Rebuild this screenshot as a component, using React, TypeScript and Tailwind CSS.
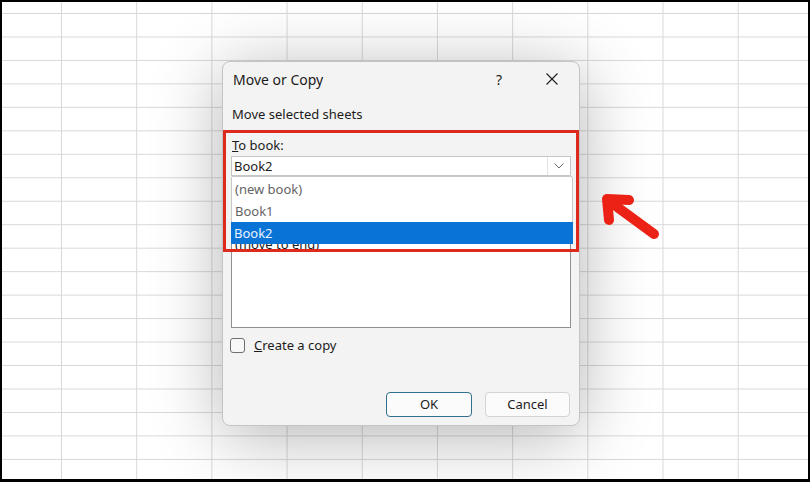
import React from 'react';

const font = "font-['Noto_Sans','Open_Sans',sans-serif]";

function CloseIcon() {
  return (
    <svg width="12" height="12" viewBox="0 0 12 12" fill="none" stroke="#1f1f1f" strokeWidth="1.1">
      <line x1="0.5" y1="0.5" x2="11.5" y2="11.5" />
      <line x1="11.5" y1="0.5" x2="0.5" y2="11.5" />
    </svg>
  );
}

function Chevron() {
  return (
    <svg width="10" height="6" viewBox="0 0 10 6" fill="none" stroke="#6b6b6b" strokeWidth="1">
      <polyline points="0.5,0.5 5,5 9.5,0.5" />
    </svg>
  );
}

function Arrow() {
  return (
    <svg className="absolute left-[590px] top-[180px]" width="75" height="65" viewBox="0 0 75 65">
      <g stroke="#ec2216" strokeWidth="10" strokeLinecap="round" strokeLinejoin="round" fill="none">
        <polyline points="37,18 15,17 17,38" />
        <line x1="17" y1="19" x2="62" y2="52" />
      </g>
    </svg>
  );
}

function Dialog() {
  return (
    <div className={`absolute left-[220px] top-[59px] w-[358px] h-[365px] flex flex-col rounded-lg border border-[#c4c4c4] bg-[#f3f3f3] text-[#1b1b1b] shadow-[0_10px_70px_rgba(0,0,0,0.3)] ${font}`}>
      {/* title bar */}
      <div className="h-[34px] flex items-center pl-[10px]">
        <span className="flex-1 text-[14px]">Move or Copy</span>
        <span className="w-[30px] text-center text-[14px]">?</span>
        <span className="w-[44px] ml-[16px] mr-[5px] flex justify-center">
          <CloseIcon />
        </span>
      </div>

      <div className="px-[8px] flex flex-col flex-1 text-[13px]">
        <div className="mt-[9px] h-[18px] leading-[18px] pl-[1px]">Move selected sheets</div>
        <div className="mt-[13px] h-[18px] leading-[18px] pl-[1px]">
          <u>T</u>o book:
        </div>
        <div className="mt-[2px] h-[20px] flex border border-[#c6c6c6] bg-white">
          <span className="flex-1 pl-[2px] leading-[18px]">Book2</span>
          <span className="w-[23px] flex items-center justify-center border-l border-[#e2e2e2]">
            <Chevron />
          </span>
        </div>
        {/* sheet list, mostly covered by the open dropdown */}
        <div className="mt-[39px] h-[113px] border border-[#8f8f8f] bg-white pt-[19px]">
          <div className="h-[19px] leading-[19px] pl-[3px]">(move to end)</div>
        </div>

        <div className="mt-[10px] flex items-center gap-[9px] -ml-[1px]">
          <span className="w-[15px] h-[15px] rounded-[3px] border border-[#6f6f6f] bg-[#f7f7f7]" />
          <span className="leading-[15px]">
            <u>C</u>reate a copy
          </span>
        </div>

        <div className="mt-auto mb-[8px] flex justify-end gap-[13px] pr-[1px]">
          <button className="w-[86px] h-[25px] rounded-[4px] border border-[#336f8f] bg-[#fbfbfb] text-[13px]">OK</button>
          <button className="w-[85px] h-[25px] rounded-[4px] border border-[#d3d3d3] bg-[#fbfbfb] text-[13px]">Cancel</button>
        </div>
      </div>

      {/* open dropdown list */}
      <div className="absolute left-[8px] top-[114px] w-[342px] h-[68px] rounded-[2px] border border-[#c8c8c8] bg-white pt-[1px] text-[13px]">
        <div className="h-[22px] leading-[22px] pl-[3px] text-[#646464]">(new book)</div>
        <div className="h-[22px] leading-[22px] pl-[3px] text-[#646464]">Book1</div>
        <div className="h-[22px] leading-[22px] pl-[3px] -mx-[1px] bg-[#0a74d6] text-[#eaf3ff]">Book2</div>
      </div>
    </div>
  );
}

export default function App() {
  return (
    <div className="w-[810px] h-[482px] bg-black pt-[2px] pl-[2px] pr-[2px] pb-[3px]">
      <div className="relative w-full h-full overflow-hidden bg-white bg-[linear-gradient(90deg,#d8d8d8_1px,transparent_1px),linear-gradient(180deg,#d8d8d8_1px,transparent_1px)] bg-[size:75.2px_23.47px] bg-[position:59px_11px]">
        <Dialog />
        {/* highlight annotation */}
        <div className="absolute left-[221px] top-[128px] w-[356px] h-[122px] border-[3px] border-[#dd2a1d]" />
        <Arrow />
      </div>
    </div>
  );
}
